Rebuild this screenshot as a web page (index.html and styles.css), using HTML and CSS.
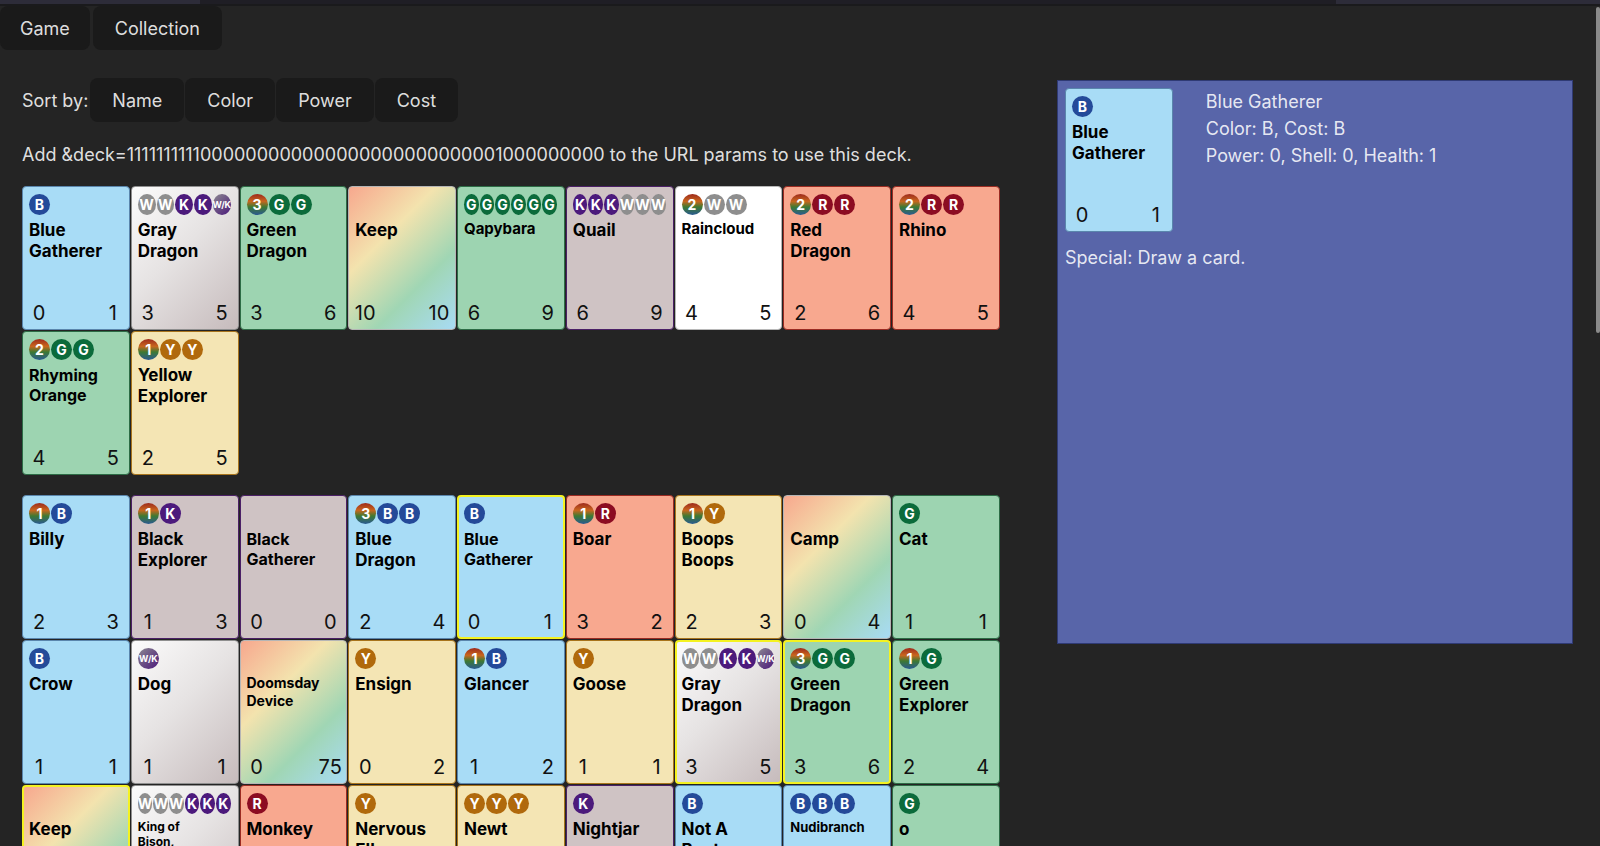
FILE: index.html
```html
<!DOCTYPE html>
<html lang="en">
<head>
<meta charset="utf-8">
<title>Collection</title>
<link rel="stylesheet" href="styles.css">
</head>
<body>
<div class="topbar"></div>
<nav class="nav">
  <button class="btn btn-game">Game</button>
  <button class="btn btn-coll">Collection</button>
</nav>
<main class="main">
  <section class="left">
    <div class="sortrow">
      <span class="sortlabel">Sort by:</span>
      <button class="btn">Name</button>
      <button class="btn">Color</button>
      <button class="btn">Power</button>
      <button class="btn">Cost</button>
    </div>
    <p class="hint">Add &amp;deck=1111111111000000000000000000000000001000000000 to the URL params to use this deck.</p>

    <div class="cards deck">
      <div class="card c-blue"><div class="cost"><span class="pip p-b">B</span></div><div class="name">Blue Gatherer</div><div class="stats"><span>0</span><span>1</span></div></div>
      <div class="card c-gray"><div class="cost"><span class="pip p-w">W</span><span class="pip p-w">W</span><span class="pip p-k">K</span><span class="pip p-k">K</span><span class="pip p-wk">W/K</span></div><div class="name">Gray Dragon</div><div class="stats"><span>3</span><span>5</span></div></div>
      <div class="card c-green"><div class="cost"><span class="pip p-n">3</span><span class="pip p-g">G</span><span class="pip p-g">G</span></div><div class="name">Green Dragon</div><div class="stats"><span>3</span><span>6</span></div></div>
      <div class="card c-rainbow"><div class="cost"></div><div class="name">Keep</div><div class="stats"><span>10</span><span>10</span></div></div>
      <div class="card c-green"><div class="cost"><span class="pip p-g">G</span><span class="pip p-g">G</span><span class="pip p-g">G</span><span class="pip p-g">G</span><span class="pip p-g">G</span><span class="pip p-g">G</span></div><div class="name n15">Qapybara</div><div class="stats"><span>6</span><span>9</span></div></div>
      <div class="card c-black"><div class="cost"><span class="pip p-k">K</span><span class="pip p-k">K</span><span class="pip p-k">K</span><span class="pip p-w">W</span><span class="pip p-w">W</span><span class="pip p-w">W</span></div><div class="name">Quail</div><div class="stats"><span>6</span><span>9</span></div></div>
      <div class="card c-white"><div class="cost"><span class="pip p-n">2</span><span class="pip p-w">W</span><span class="pip p-w">W</span></div><div class="name n15">Raincloud</div><div class="stats"><span>4</span><span>5</span></div></div>
      <div class="card c-red"><div class="cost"><span class="pip p-n">2</span><span class="pip p-r">R</span><span class="pip p-r">R</span></div><div class="name">Red Dragon</div><div class="stats"><span>2</span><span>6</span></div></div>
      <div class="card c-red"><div class="cost"><span class="pip p-n">2</span><span class="pip p-r">R</span><span class="pip p-r">R</span></div><div class="name">Rhino</div><div class="stats"><span>4</span><span>5</span></div></div>
      <div class="card c-green"><div class="cost"><span class="pip p-n">2</span><span class="pip p-g">G</span><span class="pip p-g">G</span></div><div class="name n16">Rhyming Orange</div><div class="stats"><span>4</span><span>5</span></div></div>
      <div class="card c-yellow"><div class="cost"><span class="pip p-n">1</span><span class="pip p-y">Y</span><span class="pip p-y">Y</span></div><div class="name">Yellow Explorer</div><div class="stats"><span>2</span><span>5</span></div></div>
    </div>

    <div class="cards collection">
      <div class="card c-blue"><div class="cost"><span class="pip p-n">1</span><span class="pip p-b">B</span></div><div class="name">Billy</div><div class="stats"><span>2</span><span>3</span></div></div>
      <div class="card c-black"><div class="cost"><span class="pip p-n">1</span><span class="pip p-k">K</span></div><div class="name">Black Explorer</div><div class="stats"><span>1</span><span>3</span></div></div>
      <div class="card c-black"><div class="cost"></div><div class="name n16">Black Gatherer</div><div class="stats"><span>0</span><span>0</span></div></div>
      <div class="card c-blue"><div class="cost"><span class="pip p-n">3</span><span class="pip p-b">B</span><span class="pip p-b">B</span></div><div class="name">Blue Dragon</div><div class="stats"><span>2</span><span>4</span></div></div>
      <div class="card c-blue sel"><div class="cost"><span class="pip p-b">B</span></div><div class="name n16">Blue Gatherer</div><div class="stats"><span>0</span><span>1</span></div></div>
      <div class="card c-red"><div class="cost"><span class="pip p-n">1</span><span class="pip p-r">R</span></div><div class="name">Boar</div><div class="stats"><span>3</span><span>2</span></div></div>
      <div class="card c-yellow"><div class="cost"><span class="pip p-n">1</span><span class="pip p-y">Y</span></div><div class="name">Boops Boops</div><div class="stats"><span>2</span><span>3</span></div></div>
      <div class="card c-rainbow"><div class="cost"></div><div class="name">Camp</div><div class="stats"><span>0</span><span>4</span></div></div>
      <div class="card c-green"><div class="cost"><span class="pip p-g">G</span></div><div class="name">Cat</div><div class="stats"><span>1</span><span>1</span></div></div>

      <div class="card c-blue"><div class="cost"><span class="pip p-b">B</span></div><div class="name">Crow</div><div class="stats"><span>1</span><span>1</span></div></div>
      <div class="card c-gray"><div class="cost"><span class="pip p-wk">W/K</span></div><div class="name">Dog</div><div class="stats"><span>1</span><span>1</span></div></div>
      <div class="card c-rainbow"><div class="cost"></div><div class="name n14">Doomsday Device</div><div class="stats"><span>0</span><span>75</span></div></div>
      <div class="card c-yellow"><div class="cost"><span class="pip p-y">Y</span></div><div class="name">Ensign</div><div class="stats"><span>0</span><span>2</span></div></div>
      <div class="card c-blue"><div class="cost"><span class="pip p-n">1</span><span class="pip p-b">B</span></div><div class="name">Glancer</div><div class="stats"><span>1</span><span>2</span></div></div>
      <div class="card c-yellow"><div class="cost"><span class="pip p-y">Y</span></div><div class="name">Goose</div><div class="stats"><span>1</span><span>1</span></div></div>
      <div class="card c-gray sel"><div class="cost"><span class="pip p-w">W</span><span class="pip p-w">W</span><span class="pip p-k">K</span><span class="pip p-k">K</span><span class="pip p-wk">W/K</span></div><div class="name">Gray Dragon</div><div class="stats"><span>3</span><span>5</span></div></div>
      <div class="card c-green sel"><div class="cost"><span class="pip p-n">3</span><span class="pip p-g">G</span><span class="pip p-g">G</span></div><div class="name">Green Dragon</div><div class="stats"><span>3</span><span>6</span></div></div>
      <div class="card c-green"><div class="cost"><span class="pip p-n">1</span><span class="pip p-g">G</span></div><div class="name">Green Explorer</div><div class="stats"><span>2</span><span>4</span></div></div>

      <div class="card c-rainbow sel"><div class="cost"></div><div class="name">Keep</div><div class="stats"><span>10</span><span>10</span></div></div>
      <div class="card c-gray"><div class="cost"><span class="pip p-w">W</span><span class="pip p-w">W</span><span class="pip p-w">W</span><span class="pip p-k">K</span><span class="pip p-k">K</span><span class="pip p-k">K</span></div><div class="name n12">King of<br>Bison,</div><div class="stats"><span>8</span><span>8</span></div></div>
      <div class="card c-red"><div class="cost"><span class="pip p-r">R</span></div><div class="name">Monkey</div><div class="stats"><span>1</span><span>2</span></div></div>
      <div class="card c-yellow"><div class="cost"><span class="pip p-y">Y</span></div><div class="name">Nervous Elk</div><div class="stats"><span>1</span><span>3</span></div></div>
      <div class="card c-yellow"><div class="cost"><span class="pip p-y">Y</span><span class="pip p-y">Y</span><span class="pip p-y">Y</span></div><div class="name">Newt</div><div class="stats"><span>2</span><span>4</span></div></div>
      <div class="card c-black"><div class="cost"><span class="pip p-k">K</span></div><div class="name">Nightjar</div><div class="stats"><span>1</span><span>1</span></div></div>
      <div class="card c-blue"><div class="cost"><span class="pip p-b">B</span></div><div class="name">Not A Boat</div><div class="stats"><span>0</span><span>3</span></div></div>
      <div class="card c-blue"><div class="cost"><span class="pip p-b">B</span><span class="pip p-b">B</span><span class="pip p-b">B</span></div><div class="name n13">Nudibranch</div><div class="stats"><span>3</span><span>4</span></div></div>
      <div class="card c-green"><div class="cost"><span class="pip p-g">G</span></div><div class="name">o</div><div class="stats"><span>1</span><span>1</span></div></div>
    </div>
  </section>

  <aside class="panel">
    <div class="panel-top">
      <div class="card c-blue"><div class="cost"><span class="pip p-b">B</span></div><div class="name">Blue Gatherer</div><div class="stats"><span>0</span><span>1</span></div></div>
      <div class="info">
        <div>Blue Gatherer</div>
        <div>Color: B, Cost: B</div>
        <div>Power: 0, Shell: 0, Health: 1</div>
      </div>
    </div>
    <div class="special">Special: Draw a card.</div>
  </aside>
</main>
<div class="scrollthumb"></div>
</body>
</html>
```

FILE: styles.css
```css
html, body {
  margin: 0;
  padding: 0;
  overflow: hidden;
  height: 100%;
}

body {
  background: #242424;
  color: rgba(255, 255, 255, 0.87);
  font-family: Inter, "Noto Sans", sans-serif;
  font-size: 18px;
  line-height: 1.5;
}

.topbar {
  height: 4px;
  background: linear-gradient(to right, #2d2c39 0, #2d2c39 200px, #1f1e25 200px, #1f1e25 1336px, #2d2c39 1336px);
  border-bottom: 2px solid #1a1a1c;
}

.btn {
  font-family: inherit;
  font-size: 18px;
  line-height: 27px;
  color: rgba(255, 255, 255, 0.87);
  background: #1a1a1a;
  border: 1px solid transparent;
  border-radius: 8px;
  height: 44px;
  padding: 0 21px;
  cursor: pointer;
}

.nav {
  display: flex;
  gap: 3px;
  height: 44px;
}

.nav .btn-game {
  padding: 0 19px;
}

.nav .btn-coll {
  padding: 0 21px;
}

.main {
  display: flex;
  align-items: flex-start;
  margin-top: 28px;
}

.left {
  flex: 0 0 1035px;
  box-sizing: border-box;
  padding-left: 22px;
}

.sortrow {
  display: flex;
  align-items: center;
  gap: 1px;
  height: 44px;
}

.sortlabel {
  margin-right: 1px;
}

.hint {
  margin: 19px 0 18px;
}

.cards {
  display: flex;
  flex-wrap: wrap;
  gap: 1px;
  width: 980px;
}

.collection {
  margin-top: 20px;
}

/* Card */
.card {
  box-sizing: border-box;
  width: 107.75px;
  height: 144px;
  flex: 0 0 107.75px;
  border: 1px solid #888;
  border-radius: 4px;
  padding: 7px 6px 4px;
  display: flex;
  flex-direction: column;
  color: #000;
  overflow: hidden;
}

.card.sel {
  border: 2px solid #f4f221;
  padding: 6px 5px 3px;
}

.c-blue { background: #a8dcf6; border-color: #5a86ad; }
.c-green { background: #9dd4b1; border-color: #2d6c46; }
.c-black { background: #cfc3c4; border-color: #4b2066; }
.c-white { background: #ffffff; border-color: #b8b8b8; }
.c-red { background: #f8a88f; border-color: #9b2b22; }
.c-yellow { background: #f4e5b4; border-color: #a8741c; }
.c-gray {
  background: linear-gradient(135deg, #fbfbfb 0%, #e6e3e3 45%, #c6bbbc 100%);
  border-color: #8f8f8f;
}
.c-rainbow {
  background: linear-gradient(135deg, #f7a88e 0%, #f3e3ae 35%, #a0d6b4 68%, #a8dbf4 100%);
  border-color: #b5b5b5;
}

.cost {
  display: flex;
  height: 21px;
  flex: 0 0 21px;
}

.pip {
  flex: 0 1 21px;
  min-width: 0;
  height: 21px;
  margin-right: 1px;
  border-radius: 50%;
  display: flex;
  align-items: center;
  justify-content: center;
  color: #fff;
  font-weight: 700;
  font-size: 14px;
  line-height: 21px;
}

.p-b { background: #244a99; }
.p-w { background: #8e8e8e; }
.p-k { background: #4c1a7c; }
.p-g { background: #0b6b3b; }
.p-r { background: #8c0c22; }
.p-y { background: #b0690c; }
.p-wk {
  background: linear-gradient(135deg, #8e8a92 0%, #6a4f84 50%, #4c1a7c 100%);
  font-size: 9px;
  letter-spacing: -0.2px;
}
.p-n {
  background: linear-gradient(to bottom, #9e2a1c 0%, #c8661e 35%, #3d7a32 62%, #2a5a92 100%);
}

.name {
  margin-top: 5px;
  max-width: 84px;
  font-weight: 700;
  font-size: 17px;
  line-height: 1.25;
}

.name.n16 { font-size: 16px; }
.name.n15 { font-size: 15px; }
.name.n14 { font-size: 14px; }
.name.n13 { font-size: 13px; }
.name.n12 { font-size: 12px; }

.stats {
  margin: auto -3px 0;
  display: flex;
  justify-content: space-between;
  font-size: 20px;
  line-height: 24px;
  color: #111;
}

.stats span {
  width: 26px;
  text-align: center;
}

/* Detail panel */
.panel {
  flex: 0 0 516px;
  box-sizing: border-box;
  height: 564px;
  margin-left: 22px;
  margin-top: 2px;
  background: #5865a9;
  border: 1px solid #2f3a74;
  padding: 7px;
  color: rgba(255, 255, 255, 0.87);
}

.panel-top {
  display: flex;
  align-items: flex-start;
}

.info {
  margin-left: 33px;
  line-height: 27px;
}

.special {
  margin-top: 12px;
  line-height: 27px;
}

.scrollthumb {
  position: fixed;
  right: 0;
  top: 7px;
  width: 4px;
  height: 326px;
  background: #8a8a8a;
  border-radius: 2px;
}
```
